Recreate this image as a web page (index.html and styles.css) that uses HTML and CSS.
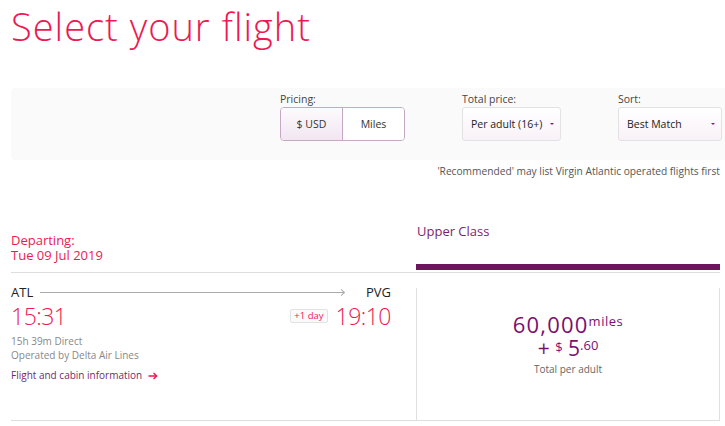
FILE: index.html
```html
<!DOCTYPE html>
<html lang="en">
<head>
    <meta charset="UTF-8">
    <meta name="viewport" content="width=device-width, initial-scale=1.0">
    <title>Select your flight</title>
    <link rel="stylesheet" href="styles.css">
</head>
<body>
    <div class="page">
        <h1 class="title">Select your flight</h1>

        <!-- 筛选条件 -->
        <div class="filters">
            <div class="group">
                <div class="label">Pricing:</div>
                <div class="toggle">
                    <a href="javascript:;" class="active">$ USD</a>
                    <a href="javascript:;">Miles</a>
                </div>
            </div>
            <div class="group total">
                <div class="label">Total price:</div>
                <a href="javascript:;" class="select">Per adult (16+)<span class="caret"></span></a>
            </div>
            <div class="group sort">
                <div class="label">Sort:</div>
                <a href="javascript:;" class="select">Best Match<span class="caret"></span></a>
            </div>
        </div>
        <p class="note">'Recommended' may list Virgin Atlantic operated flights first</p>

        <!-- 航班列表 -->
        <div class="results">
            <div class="head-left">
                <div>Departing:</div>
                <div>Tue 09 Jul 2019</div>
            </div>
            <div class="head-right">
                <div class="cabin">Upper Class</div>
                <div class="cabin-bar"></div>
            </div>

            <div class="flight">
                <div class="route">
                    <span>ATL</span>
                    <span class="arrow"></span>
                    <span>PVG</span>
                </div>
                <div class="times">
                    <span class="time">15:31</span>
                    <span class="arrive"><span class="plus">+1 day</span><span class="time">19:10</span></span>
                </div>
                <div class="meta first">15h 39m Direct</div>
                <div class="meta">Operated by Delta Air Lines</div>
                <a href="javascript:;" class="info">Flight and cabin information
                    <svg class="go" width="10" height="8" viewBox="0 0 10 8">
                        <path d="M0.5 4H8.5M5.5 1L8.7 4L5.5 7" fill="none" stroke="#ec1a52" stroke-width="1.4"/>
                    </svg>
                </a>
            </div>
            <div class="fare">
                <div class="miles">60,000<sup>miles</sup></div>
                <div class="cash">+ <small>$</small> 5<sup>.60</sup></div>
                <div class="per">Total per adult</div>
            </div>
        </div>
    </div>
</body>
</html>
```

FILE: styles.css
```css
*{
    margin: 0;
    padding: 0;
    box-sizing: border-box;
}

body{
    font-family: "Open Sans", "Liberation Sans", sans-serif;
    color: #333;
    overflow: hidden;
}

.page{
    width: 725px;
    padding: 0 5px 0 11px;
}

.title{
    font-weight: 300;
    font-size: 38px;
    letter-spacing: 1px;
    line-height: 52px;
    color: #ec1a52;
}

/* 筛选条件 */
.filters{
    display: flex;
    margin-top: 36px;
    margin-right: -30px;
    height: 72px;
    padding: 5px 0 0 269px;
    background-color: #fafafa;
    border-radius: 4px 0 0 4px;
}

.group{
    margin-right: 57px;
}

.group.sort{
    margin-right: 0;
}

.label{
    font-size: 10.5px;
    line-height: 12px;
    color: #444;
    margin-bottom: 2px;
}

.toggle{
    display: flex;
    width: 125px;
    height: 34px;
    border: 1px solid #c4a8c4;
    border-radius: 4px;
    overflow: hidden;
}

.toggle a{
    flex: 1;
    display: flex;
    align-items: center;
    justify-content: center;
    font-size: 10.5px;
    color: #333;
    text-decoration: none;
    background-color: #fff;
}

.toggle a + a{
    border-left: 1px solid #c4a8c4;
}

.toggle a.active{
    background: linear-gradient(#fdfbfd, #f1e6f1);
}

.select{
    display: flex;
    align-items: center;
    justify-content: space-between;
    height: 34px;
    padding: 0 6px 0 8px;
    border: 1px solid #e2e2e2;
    border-radius: 3px;
    background: linear-gradient(#fff, #f9f1f8);
    font-size: 10.5px;
    color: #222;
    text-decoration: none;
}

.total .select{
    width: 99px;
}

.sort .select{
    width: 104px;
}

.caret{
    width: 0;
    height: 0;
    border-left: 2px solid transparent;
    border-right: 2px solid transparent;
    border-top: 2px solid #8a1a78;
}

.note{
    text-align: right;
    font-size: 10.2px;
    line-height: 12px;
    color: #555;
    margin-top: 5px;
}

/* 航班列表 */
.results{
    display: grid;
    grid-template-columns: 405px 304px;
    margin-top: 42px;
}

.head-left{
    color: #ec1a52;
    font-size: 13px;
    line-height: 15px;
    padding-top: 14px;
    border-bottom: 1px solid #ddd;
}

.head-right{
    height: 54px;
    border-bottom: 1px solid #ddd;
}

.cabin{
    color: #7a1f6e;
    font-size: 13px;
    line-height: 16px;
    padding: 4px 0 0 1px;
    height: 45px;
}

.cabin-bar{
    height: 6px;
    background-color: #6e1659;
}

.flight{
    padding-top: 11px;
    height: 148px;
    border-bottom: 1px solid #ddd;
}

.route{
    display: flex;
    align-items: center;
    font-size: 13px;
    line-height: 16px;
    color: #222;
    padding-right: 25px;
}

.arrow{
    flex: 1;
    height: 1px;
    background-color: #aaa;
    margin: 0 22px 0 7px;
    position: relative;
}

/* 箭头 */
.arrow::after{
    content: "";
    position: absolute;
    right: 0;
    top: -2px;
    width: 4px;
    height: 4px;
    border-top: 1px solid #aaa;
    border-right: 1px solid #aaa;
    transform: rotate(45deg);
}

.times{
    display: flex;
    justify-content: space-between;
    align-items: center;
    padding-right: 25px;
    margin-top: 2px;
}

.time{
    color: #ec1a52;
    font-size: 23px;
    font-weight: 300;
    letter-spacing: -0.5px;
    line-height: 28px;
}

.arrive{
    display: flex;
    align-items: center;
}

.plus{
    font-size: 9.5px;
    line-height: 12px;
    color: #ec1a52;
    border: 1px solid #e2e2e2;
    border-radius: 2px;
    background-color: #fafafa;
    padding: 0 3px;
    margin-right: 8px;
}

.meta{
    font-size: 10px;
    line-height: 14px;
    color: #888;
}

.meta.first{
    margin-top: 4px;
}

.info{
    display: inline-flex;
    align-items: center;
    margin-top: 0;
    font-size: 10px;
    line-height: 16px;
    color: #7a1f6e;
    text-decoration: none;
}

.go{
    margin-left: 6px;
    margin-top: 2px;
}

.fare{
    margin-top: 15px;
    border-left: 1px solid #e0e0e0;
    border-right: 1px solid #e0e0e0;
    border-bottom: 1px solid #ddd;
    text-align: center;
    color: #7a1070;
    padding-top: 22px;
}

.miles{
    font-size: 22px;
    letter-spacing: 1.2px;
    line-height: 22px;
}

.miles sup{
    font-size: 13px;
    letter-spacing: 0.5px;
    vertical-align: 7px;
}

.cash{
    font-size: 21px;
    line-height: 20px;
}

.cash small{
    font-size: 13px;
    vertical-align: 4px;
}

.cash sup{
    font-size: 13px;
    vertical-align: 6px;
}

.per{
    font-size: 10px;
    color: #666;
    margin-top: 4px;
}
```
